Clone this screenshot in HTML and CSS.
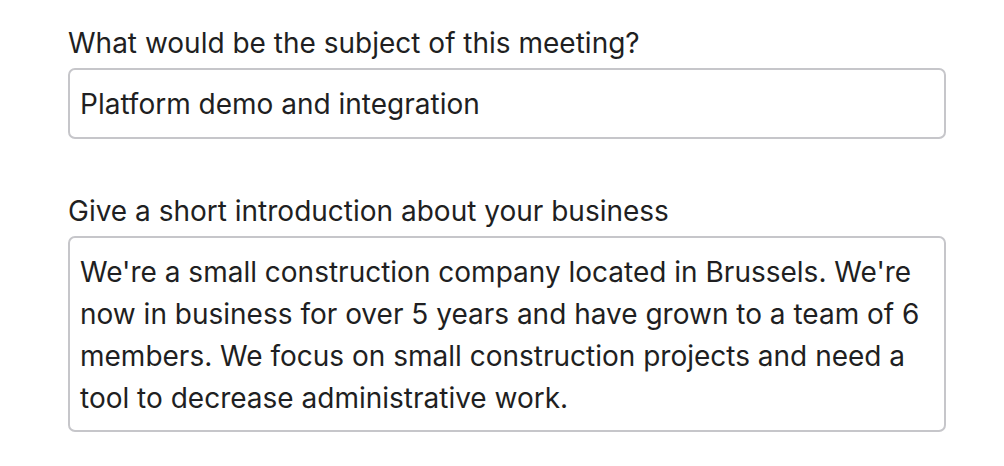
FILE: index.html
```html
<!DOCTYPE html>
<html lang="en">
<head>
<meta charset="utf-8">
<title>Meeting request</title>
<link rel="stylesheet" href="styles.css">
</head>
<body>
<form class="form">
  <div class="field">
    <label class="label" for="subject">What would be the subject of this meeting?</label>
    <input class="control input" id="subject" type="text" value="Platform demo and integration">
  </div>
  <div class="field">
    <label class="label" for="intro">Give a short introduction about your business</label>
    <textarea class="control textarea" id="intro" rows="4">We're a small construction company located in Brussels. We're
now in business for over 5 years and have grown to a team of 6
members. We focus on small construction projects and need a
tool to decrease administrative work.</textarea>
  </div>
</form>
</body>
</html>
```

FILE: styles.css
```css
html, body {
  margin: 0;
  padding: 0;
  background: #ffffff;
}

body {
  font-family: "Inter", "Noto Sans", sans-serif;
  color: #1f1f22;
}

.form {
  display: flex;
  flex-direction: column;
  gap: 55px;
  width: 878px;
  padding: 26px 0 0 68px;
}

.field {
  display: flex;
  flex-direction: column;
  gap: 8px;
}

.label {
  font-size: 28px;
  line-height: 34px;
  color: #1f1f22;
}

.control {
  box-sizing: border-box;
  width: 100%;
  margin: 0;
  border: 2px solid #c6c6ca;
  border-radius: 7px;
  background: #ffffff;
  font-family: "Inter", "Noto Sans", sans-serif;
  font-size: 28px;
  line-height: 42px;
  color: #1f1f22;
  padding: 1px 10px 0;
  outline: none;
}

.input {
  height: 71px;
}

.textarea {
  height: 196px;
  padding: 13px 10px 11px;
  resize: none;
  overflow: hidden;
  white-space: pre-wrap;
}
```
